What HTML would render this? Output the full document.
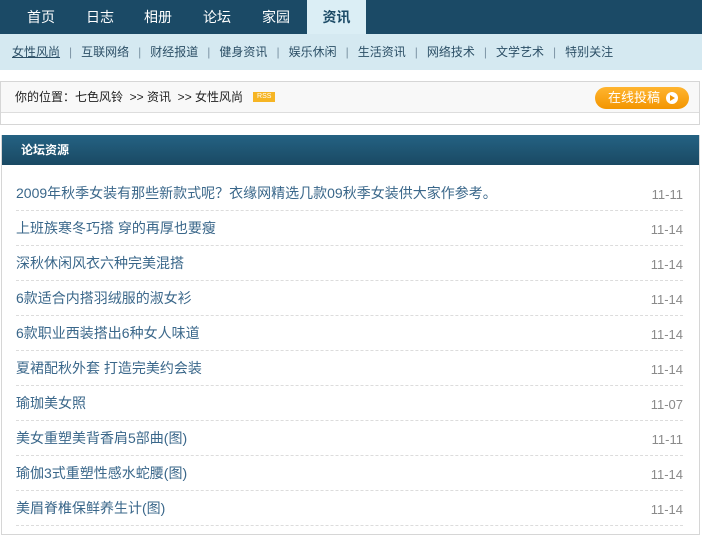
<!DOCTYPE html>
<html><head><meta charset="utf-8"><style>
*{margin:0;padding:0;box-sizing:border-box}
body{width:702px;height:525px;overflow:hidden;background:#fff;font-family:"Liberation Sans","Noto Sans CJK SC",sans-serif;font-size:12px;color:#333}
.top{height:34px;background:#1b4a66;position:relative}
.top span{position:absolute;top:0;line-height:34px;font-size:14px;color:#fff}
.top .act{background:#dbeef5;color:#1b4a66;font-weight:bold;width:59px;text-align:center;left:307px;height:34px}
.sub{height:36px;background:#d5e9f1;line-height:36px;padding-left:12px;font-size:12px;color:#2c4f66;white-space:nowrap}
.sub i{font-style:normal;color:#7c94a4;margin:0 9px}
.sub u{text-decoration:underline}
.crumb{position:absolute;left:0;top:81px;width:700px;height:44px;border:1px solid #d6d6d6}
.crumb .a{height:31px;background:#f8f8f8;border-bottom:1px solid #ddd;line-height:30px;padding-left:14px;color:#222}
.rss{display:inline-block;background:#f6b524;color:#fff;font-size:7px;line-height:10px;padding:0 4px;vertical-align:3px;margin-left:10px}
.btn{position:absolute;left:594px;top:5px;width:94px;height:22px;border-radius:11px;background:linear-gradient(#ffb530,#f39500);color:#fff;font-size:13px;line-height:22px;padding-left:13px}
.btn b{position:absolute;right:11px;top:5px;width:12px;height:12px;border-radius:6px;background:#fff}
.btn b:after{content:"";position:absolute;left:4px;top:3px;border-left:5px solid #f39500;border-top:3px solid transparent;border-bottom:3px solid transparent}
.box{position:absolute;left:1px;top:135px;width:699px;height:400px;border:1px solid #d6d6d6;border-top:none}
.hd{height:30px;background:linear-gradient(#246283,#1a4963);color:#fff;font-weight:bold;font-size:12px;line-height:30px;padding-left:19px}
ul{list-style:none;margin:11px 16px 0 14px}
li{height:35px;line-height:35px;border-bottom:1px dashed #dcdcdc;font-size:14px;color:#3a678a;position:relative}
li em{position:absolute;right:0;top:1px;font-style:normal;font-size:13px;color:#8a8a8a}
</style></head><body>
<div class="top">
<span style="left:27px">首页</span><span style="left:86px">日志</span><span style="left:144px">相册</span><span style="left:203px">论坛</span><span style="left:262px">家园</span><span class="act">资讯</span>
</div>
<div class="sub"><u>女性风尚</u><i>|</i>互联网络<i>|</i>财经报道<i>|</i>健身资讯<i>|</i>娱乐休闲<i>|</i>生活资讯<i>|</i>网络技术<i>|</i>文学艺术<i>|</i>特别关注</div>
<div class="crumb"><div class="a">你的位置：七色风铃 &nbsp;&gt;&gt; 资讯 &nbsp;&gt;&gt; 女性风尚<span class="rss">RSS</span></div><div class="btn">在线投稿<b></b></div></div>
<div class="box"><div class="hd">论坛资源</div>
<ul>
<li>2009年秋季女装有那些新款式呢？衣缘网精选几款09秋季女装供大家作参考。<em>11-11</em></li>
<li>上班族寒冬巧搭 穿的再厚也要瘦<em>11-14</em></li>
<li>深秋休闲风衣六种完美混搭<em>11-14</em></li>
<li>6款适合内搭羽绒服的淑女衫<em>11-14</em></li>
<li>6款职业西装搭出6种女人味道<em>11-14</em></li>
<li>夏裙配秋外套 打造完美约会装<em>11-14</em></li>
<li>瑜珈美女照<em>11-07</em></li>
<li>美女重塑美背香肩5部曲(图)<em>11-11</em></li>
<li>瑜伽3式重塑性感水蛇腰(图)<em>11-14</em></li>
<li>美眉脊椎保鲜养生计(图)<em>11-14</em></li>
</ul></div>
</body></html>
